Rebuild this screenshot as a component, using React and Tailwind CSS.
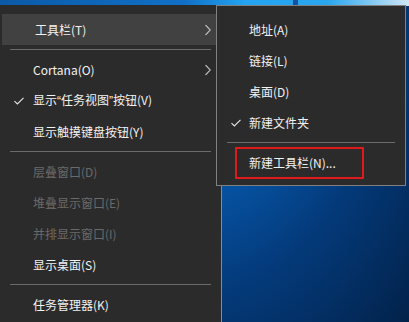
import React from 'react'

const font = { fontFamily: '"Noto Sans CJK SC", "Noto Sans", sans-serif' }

function Check() {
  return (
    <svg width="10" height="8" viewBox="0 0 10 8" className="absolute left-[14px] top-1/2 -translate-y-1/2">
      <path d="M0.5 4.2 L3.4 7 L9.5 0.8" fill="none" stroke="#e6e6e6" strokeWidth="1.1" />
    </svg>
  )
}

function Chevron() {
  return (
    <svg width="6" height="11" viewBox="0 0 6 11" className="absolute right-[10px] top-1/2 -translate-y-1/2">
      <path d="M0.5 0.5 L5.3 5.5 L0.5 10.5" fill="none" stroke="#bdbdbd" strokeWidth="1.1" />
    </svg>
  )
}

function Item({ label, check, sub, disabled, active, indent = 'pl-[33px]' }) {
  return (
    <div
      className={`relative h-[31px] flex items-center ${indent} text-[12px] ${
        disabled ? 'text-[#6a6a6a]' : 'text-[#f2f2f2]'
      } ${active ? 'bg-[#414141]' : ''}`}
    >
      {check && <Check />}
      <span>{label}</span>
      {sub && <Chevron />}
    </div>
  )
}

function Sep({ className = 'mx-[10px]' }) {
  return (
    <div className="h-[9px] flex items-center">
      <div className={`h-px flex-1 bg-[#6a6a6a] ${className}`} />
    </div>
  )
}

const q = 'font-["Liberation_Sans"]'

export default function App() {
  return (
    <div className="relative w-[409px] h-[322px] overflow-hidden bg-[radial-gradient(ellipse_at_45%_0%,#0c86ea_0%,#0760b8_30%,#043a7a_65%,#02224a_100%)]" style={font}>
      {/* top desktop strip */}
      <div className="absolute left-0 top-0 w-full h-[6px] bg-[linear-gradient(90deg,#0b5aa8_0%,#1170c6_45%,#23a4f2_60%,#2aa6ee_80%,#cfe6f4_100%)]">
        <div className="absolute left-[293px] top-0 w-[5px] h-[6px] bg-[#1553a0]" />
      </div>

      {/* main context menu */}
      <div className="absolute left-0 top-[5px] w-[222px] h-[330px] bg-[#2b2b2b] border-r border-[#8a8a8a] pt-[9px]">
        <div className="pl-[2px]">
          <Item label="工具栏(T)" sub active />
        </div>
        <Sep />
        <Item label="Cortana(O)" sub />
        <Item
          label={<>显示<span className={q}>“</span>任务视图<span className={q}>”</span>按钮(V)</>}
          check
        />
        <Item label="显示触摸键盘按钮(Y)" />
        <Sep />
        <Item label="层叠窗口(D)" disabled />
        <Item label="堆叠显示窗口(E)" disabled />
        <Item label="并排显示窗口(I)" disabled />
        <Item label="显示桌面(S)" />
        <Sep />
        <Item label="任务管理器(K)" />
      </div>

      {/* toolbar submenu */}
      <div className="absolute left-[216px] top-[5px] w-[190px] h-[181px] bg-[#2b2b2b] border border-[#808080] pt-[8px]">
        <Item label="地址(A)" indent="pl-[32px]" />
        <Item label="链接(L)" indent="pl-[32px]" />
        <Item label="桌面(D)" indent="pl-[32px]" />
        <Item label="新建文件夹" check indent="pl-[32px]" />
        <Sep />
        <div className="relative">
          <Item label="新建工具栏(N)..." indent="pl-[32px]" />
          <div className="absolute left-[18px] top-0 w-[129px] h-[32px] border-2 border-[#e01a1a]" />
        </div>
      </div>
    </div>
  )
}
